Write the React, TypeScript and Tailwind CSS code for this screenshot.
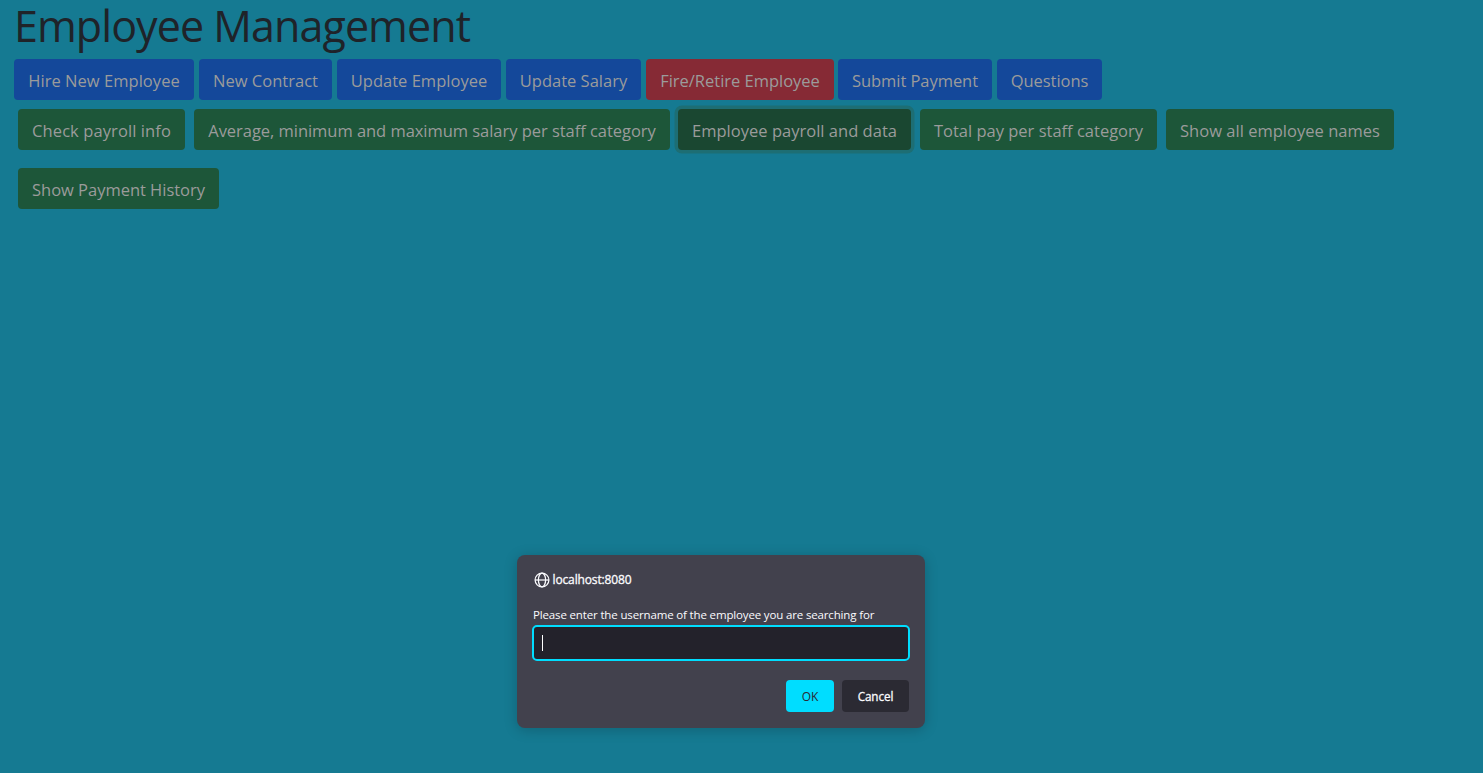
const base =
  "flex h-[41px] shrink-0 items-center justify-center rounded-[4px] pt-[3px] text-[16.5px] leading-[26px] whitespace-nowrap text-[#9b9b9b]";

const blue = "bg-[#14489a]";
const green = "bg-[#1d5639]";

const actions = [
  { label: "Hire New Employee", look: `${blue} w-[180px] tracking-[0.04px]` },
  { label: "New Contract", look: `${blue} ml-[5px] w-[133px] tracking-[0.02px]` },
  { label: "Update Employee", look: `${blue} ml-[5px] w-[164px] tracking-[0.02px]` },
  { label: "Update Salary", look: `${blue} ml-[5px] w-[135px]` },
  { label: "Fire/Retire Employee", look: "bg-[#862a35] ml-[5px] w-[188px] tracking-[-0.02px]" },
  { label: "Submit Payment", look: `${blue} ml-[4px] w-[154px] tracking-[-0.05px]` },
  { label: "Questions", look: `${blue} ml-[5px] w-[105px] tracking-[-0.05px]` },
];

const reports = [
  { label: "Check payroll info", look: `${green} w-[167px] tracking-[0.09px]` },
  {
    label: "Average, minimum and maximum salary per staff category",
    look: `${green} ml-[9px] w-[476px] tracking-[-0.04px]`,
  },
  {
    label: "Employee payroll and data",
    look: "bg-[#1a4731] ml-[8px] w-[233px] tracking-[0.02px] shadow-[0_0_0_3.5px_#1d6e74]",
  },
  { label: "Total pay per staff category", look: `${green} ml-[9px] w-[237px]` },
  { label: "Show all employee names", look: `${green} ml-[9px] w-[228px] tracking-[0.02px]` },
];

function GlobeIcon() {
  return (
    <svg width="16" height="16" viewBox="0 0 16 16" fill="none" stroke="#fbfbfe" strokeWidth="1.25">
      <circle cx="8" cy="8" r="6.9" />
      <ellipse cx="8" cy="8" rx="3.6" ry="6.9" />
      <path d="M1 8h14" />
    </svg>
  );
}

function Prompt() {
  return (
    <div
      role="dialog"
      className="absolute left-[517px] top-[555px] flex h-[173px] w-[408px] flex-col rounded-[8px] bg-[#42414d] px-[15px] text-[12px] text-[#fbfbfe] shadow-[0_2px_14px_rgba(0,0,0,0.2)]"
    >
      <div className="mt-[16px] flex h-[17px] items-center pl-[1.5px]">
        <GlobeIcon />
        <span className="ml-[3px] text-[12px] leading-4 tracking-[-0.13px] [-webkit-text-stroke:0.3px_#fbfbfe]">
          localhost:8080
        </span>
      </div>
      <label className="mt-[18px] block h-[19px] pl-px text-[11.5px] leading-[17px] tracking-[-0.15px] whitespace-nowrap">
        Please enter the username of the employee you are searching for
      </label>
      <div className="flex h-[36px] w-[378px] items-center rounded-[5px] border-2 border-[#00ddff] bg-[#23222b] pl-[8px]">
        <span className="h-[16px] w-px bg-white" />
      </div>
      <div className="mt-[19px] flex justify-end gap-2 pr-px">
        <button className="h-8 w-12 rounded-[4px] bg-[#00ddff] pt-px text-[12px] tracking-[-0.2px] text-[#2b2a33]">
          OK
        </button>
        <button className="h-8 w-[67px] rounded-[4px] bg-[#2b2a33] pt-px text-[11.7px] tracking-[-0.1px] [-webkit-text-stroke:0.3px_#fbfbfe]">
          Cancel
        </button>
      </div>
    </div>
  );
}

export default function App() {
  return (
    <div className="relative h-[773px] w-full bg-[#157a92] font-['Open_Sans',sans-serif]">
      <h1 className="h-[59px] pl-[14px] text-[43px] font-normal leading-[51px] tracking-[-0.93px] whitespace-nowrap text-[#1f2329]">
        Employee Management
      </h1>
      <div className="flex pl-[14px]">
        {actions.map((a) => (
          <button key={a.label} className={`${base} ${a.look}`}>
            {a.label}
          </button>
        ))}
      </div>
      <div className="mt-[9px] flex pl-[18px]">
        {reports.map((r) => (
          <button key={r.label} className={`${base} ${r.look}`}>
            {r.label}
          </button>
        ))}
      </div>
      <div className="mt-[18px] flex pl-[18px]">
        <button className={`${base} ${green} w-[201px] tracking-[-0.02px]`}>Show Payment History</button>
      </div>
      <Prompt />
    </div>
  );
}
